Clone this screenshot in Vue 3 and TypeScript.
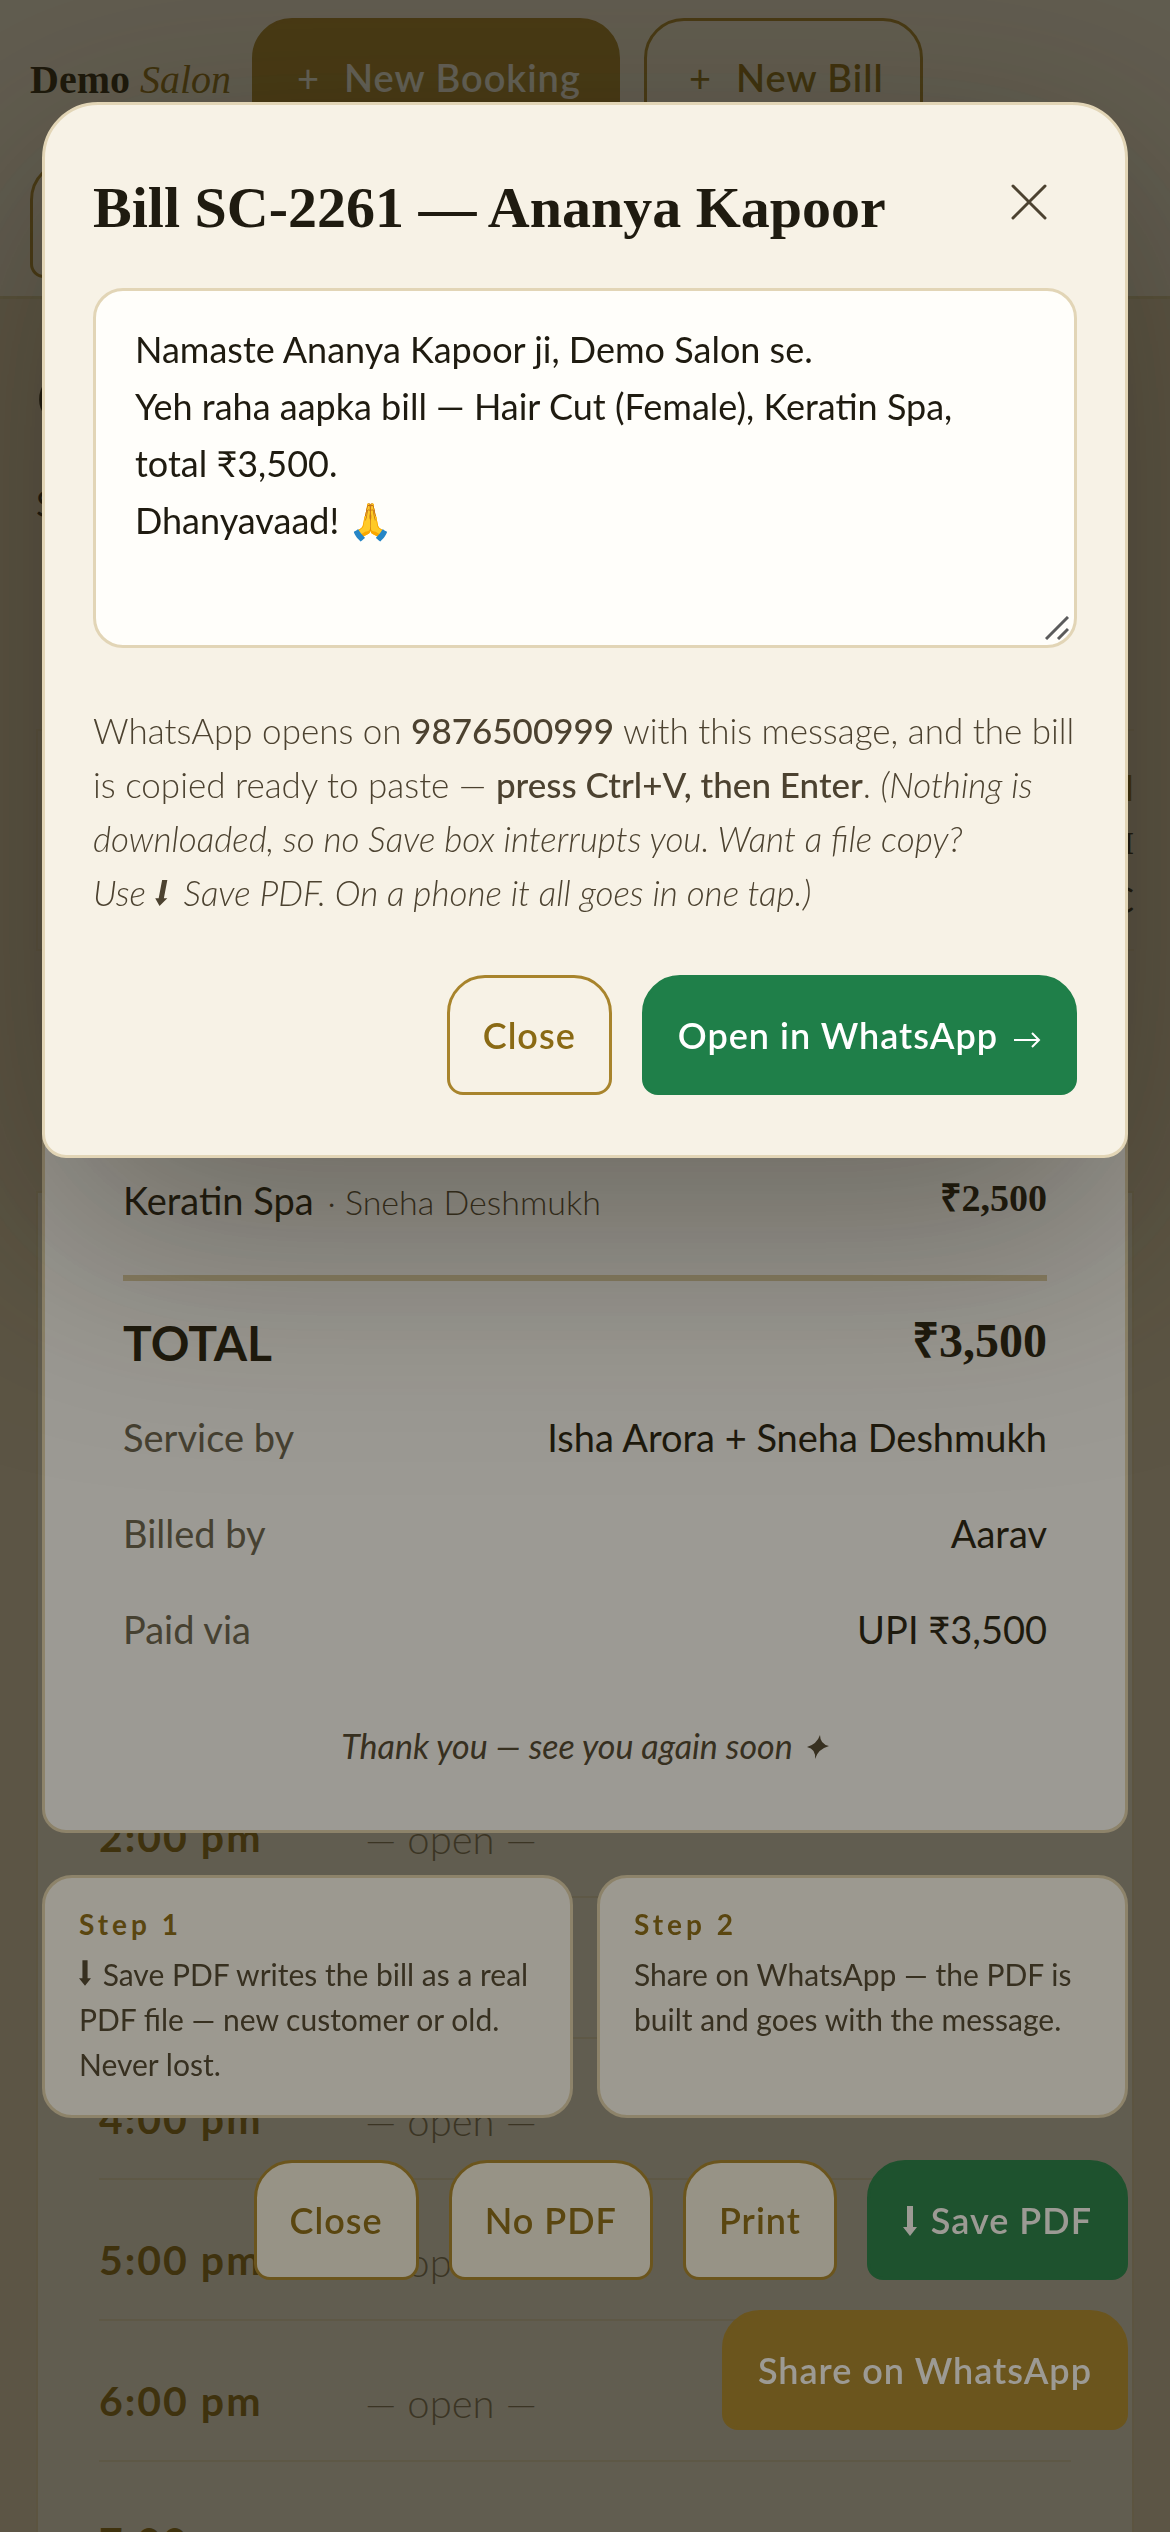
<script setup lang="ts">
import { ref } from 'vue'

const hours: string[] = ['2:00 pm', '3:00 pm', '4:00 pm', '5:00 pm', '6:00 pm', '7:00 pm']

const details: { label: string; value: string }[] = [
  { label: 'Service by', value: 'Isha Arora + Sneha Deshmukh' },
  { label: 'Billed by', value: 'Aarav' },
  { label: 'Paid via', value: 'UPI ₹3,500' },
]

const message = ref<string>(
  'Namaste Ananya Kapoor ji, Demo Salon se.\n' +
    'Yeh raha aapka bill — Hair Cut (Female), Keratin Spa, total ₹3,500.\n' +
    'Dhanyavaad! 🙏',
)
</script>

<template>
  <div class="app">
    <header class="topbar">
      <div class="brand">Demo <em>Salon</em></div>
      <button type="button" class="top-btn filled"><span class="plus">+</span>New Booking</button>
      <button type="button" class="top-btn"><span class="plus">+</span>New Bill</button>
      <button type="button" class="top-btn wide" aria-label="Menu"></button>
    </header>

    <main class="main">
      <div class="peek" aria-hidden="true">
        <span class="peek-heading">C</span>
        <span class="peek-sub">S</span>
      </div>
      <div class="side-card" aria-hidden="true">
        <span class="side-gold">H</span>
        <span class="side-bold">I</span>
        <span class="side-name">C</span>
      </div>
      <section class="schedule">
        <div v-for="hour in hours" :key="hour" class="slot">
          <span class="time">{{ hour }}</span>
          <span class="open">— open —</span>
        </div>
      </section>
    </main>

    <div class="overlay receipt-layer">
      <section class="receipt">
        <div class="line">
          <span>Keratin Spa <span class="staff">· Sneha Deshmukh</span></span>
          <span class="price">₹2,500</span>
        </div>
        <div class="total">
          <span class="total-label">TOTAL</span>
          <span class="total-price">₹3,500</span>
        </div>
        <div v-for="row in details" :key="row.label" class="detail">
          <span class="detail-label">{{ row.label }}</span>
          <span>{{ row.value }}</span>
        </div>
        <p class="thanks">
          Thank you — see you again soon
          <svg class="star" viewBox="0 0 22 24" aria-hidden="true">
            <path d="M13 0 Q13 9 22 11 Q11 14 8 24 Q9 14 0 12 Q10 9 13 0Z" fill="currentColor" />
          </svg>
        </p>
      </section>

      <div class="steps">
        <div class="step">
          <strong class="step-title">Step 1</strong>
          <p>
            <svg class="arrow" viewBox="0 0 14 30" aria-hidden="true">
              <path d="M4 0h6v21h4l-7 9-7-9h4z" fill="currentColor" />
            </svg>
            Save PDF writes the bill as a real PDF file — new customer or old. Never lost.
          </p>
        </div>
        <div class="step">
          <strong class="step-title">Step 2</strong>
          <p>Share on WhatsApp — the PDF is built and goes with the message.</p>
        </div>
      </div>

      <div class="actions">
        <button type="button" class="btn">Close</button>
        <button type="button" class="btn">No PDF</button>
        <button type="button" class="btn">Print</button>
        <button type="button" class="btn green">
          <svg class="arrow" viewBox="0 0 14 30" aria-hidden="true">
            <path d="M4 0h6v21h4l-7 9-7-9h4z" fill="currentColor" />
          </svg>
          Save PDF
        </button>
        <button type="button" class="btn gold">Share on WhatsApp</button>
      </div>
    </div>

    <div class="overlay">
      <section class="dialog" role="dialog" aria-labelledby="dialog-title">
        <div class="dialog-head">
          <h2 id="dialog-title">Bill SC-2261 — Ananya Kapoor</h2>
          <button type="button" class="close" aria-label="Close dialog">
            <svg viewBox="0 0 36 36" aria-hidden="true">
              <path d="M2 2 34 34M34 2 2 34" fill="none" stroke="currentColor" stroke-width="3" stroke-linecap="round" />
            </svg>
          </button>
        </div>
        <div class="field">
          <textarea v-model="message" aria-label="WhatsApp message"></textarea>
          <svg class="grip" viewBox="0 0 24 24" aria-hidden="true">
            <path d="M1 23 23 1M13 23 23 13" fill="none" stroke="#5b5b5b" stroke-width="3" />
          </svg>
        </div>
        <p class="note">
          WhatsApp opens on <b>9876500999</b> with this message, and the bill is copied ready to
          paste — <b>press Ctrl+V, then Enter</b>.
          <em>(Nothing is downloaded, so no Save box interrupts you. Want a file copy?
            <span class="keep">Use
              <svg class="arrow slanted" viewBox="0 0 18 30" aria-hidden="true">
                <path d="M8 0h6l-4 21h4l-9 9-5-9h4z" fill="currentColor" />
              </svg>
              Save PDF.</span>
            On a phone it all goes in one tap.)</em>
        </p>
        <div class="actions">
          <button type="button" class="btn">Close</button>
          <button type="button" class="btn green">
            Open in WhatsApp
            <svg class="right" viewBox="0 0 27 18" aria-hidden="true">
              <path d="M0 9h25M18 2l7 7-7 7" fill="none" stroke="currentColor" stroke-width="2" />
            </svg>
          </button>
        </div>
      </section>
    </div>
  </div>
</template>

<style>
body {
  margin: 0;
}
</style>

<style scoped>
.app {
  height: 100vh;
  overflow: hidden;
  background: #e6dac2;
  color: #1f1b10;
  font-family: Lato, "Noto Sans", sans-serif;
  font-size: 36px;
}

.app *,
.app *::before {
  box-sizing: border-box;
}

button {
  font-family: inherit;
  cursor: pointer;
}

.topbar {
  display: flex;
  flex-wrap: wrap;
  align-items: center;
  gap: 24px;
  padding: 18px 30px;
  background: #f8f3e8;
  border-bottom: 3px solid #dccfa8;
}

.brand {
  width: 198px;
  padding-top: 6px;
  font: bold 40px/48px "Liberation Serif", serif;
  white-space: nowrap;
}

.brand em {
  font-weight: 400;
  color: #8a6a14;
}

.top-btn {
  height: 118px;
  padding: 0 36px 0 42px;
  border: 3px solid #a8842c;
  border-radius: 40px 40px 14px 14px;
  background: transparent;
  color: #8a6a14;
  font-size: 38px;
  font-weight: 600;
  letter-spacing: 1px;
}

.top-btn.filled {
  background: #a8842c;
  color: #fff;
}

.top-btn.wide {
  width: 300px;
}

.plus {
  margin-right: 24px;
  font-weight: 400;
}

.main {
  padding: 0 36px;
}

.peek {
  display: flex;
  flex-direction: column;
  height: 430px;
  padding-top: 68px;
}

.peek-heading {
  font: bold 64px/64px "Liberation Serif", serif;
}

.peek-sub {
  margin-top: 48px;
  line-height: 48px;
}

.side-card {
  display: flex;
  flex-direction: column;
  align-items: flex-end;
  height: 222px;
  margin-bottom: 240px;
  padding-top: 32px;
  overflow: hidden;
  border: 2px solid #e0d2b0;
  border-right: 0;
}

.side-gold {
  color: #8a6a14;
  font-weight: 700;
  line-height: 48px;
}

.side-bold {
  font: bold 32px/64px "Liberation Serif", serif;
}

.side-name {
  line-height: 48px;
}

.schedule {
  padding: 564px 61px 0;
  background: #f7f2e6;
  border: 2px solid #e4d6b2;
}

.slot {
  display: flex;
  align-items: center;
  height: 141px;
  padding-top: 20px;
  border-bottom: 2px solid #ebe1c8;
}

.time {
  width: 266px;
  color: #8a6a14;
  font-size: 41px;
  font-weight: 700;
  letter-spacing: 2px;
}

.open {
  padding-top: 5px;
  color: #7d745c;
  font-size: 40px;
  font-weight: 300;
}

.overlay {
  position: fixed;
  inset: 0;
  display: flex;
  flex-direction: column;
  padding: 102px 42px;
  background: rgba(30, 25, 12, 0.44);
}

.receipt-layer {
  justify-content: flex-end;
}

.receipt {
  display: flex;
  flex: 1;
  flex-direction: column;
  justify-content: flex-end;
  margin-top: 300px;
  padding: 60px 78px;
  background: #fff;
  border: 3px solid #e4d6b4;
  border-radius: 24px;
  font-size: 38px;
}

.line,
.total,
.detail {
  display: flex;
  align-items: center;
  justify-content: space-between;
}

.line,
.detail {
  height: 96px;
}

.staff {
  margin-left: 4px;
  color: #4c4230;
  font-size: 34px;
  font-weight: 300;
}

.price,
.total-price {
  padding-bottom: 8px;
  font-family: "Liberation Serif", serif;
  font-weight: 700;
}

.total {
  height: 114px;
  margin-top: 27px;
  padding-top: 14px;
  border-top: 6px solid #ddcfa8;
}

.total-label,
.total-price {
  font-size: 48px;
  font-weight: 700;
}

.detail-label {
  color: #66604f;
}

.thanks {
  margin: 45px 0 0;
  color: #4c4230;
  font-size: 34px;
  font-style: italic;
  line-height: 48px;
  text-align: center;
}

.star {
  width: 22px;
  height: 24px;
  margin-left: 6px;
}

.steps {
  display: grid;
  grid-template-columns: 1fr 1fr;
  gap: 24px;
  margin-top: 42px;
}

.step {
  padding: 26px 34px 28px;
  background: #fffdf8;
  border: 3px solid #e4d6b4;
  border-radius: 30px;
  color: #4c4230;
  font-size: 30px;
  line-height: 45px;
}

.step-title {
  display: block;
  color: #8a6a14;
  font-size: 28px;
  line-height: 40px;
  letter-spacing: 4px;
}

.step p {
  margin: 8px 0 0;
}

.arrow {
  width: 12px;
  height: 26px;
  margin-right: 4px;
}

.btn .arrow {
  width: 14px;
  height: 30px;
  vertical-align: -2px;
}

.arrow.slanted {
  width: 16px;
}

.keep {
  white-space: nowrap;
}

.actions {
  display: flex;
  flex-wrap: wrap;
  justify-content: flex-end;
  gap: 30px;
  margin-top: 42px;
}

.btn {
  height: 120px;
  padding: 0 33px;
  border: 3px solid #a8842c;
  border-radius: 38px 38px 16px 16px;
  background: #f7f2e6;
  color: #8a6a14;
  font-size: 36px;
  font-weight: 600;
  letter-spacing: 1px;
}

.btn.green {
  border-color: #1f7f49;
  background: #1f7f49;
  color: #fff;
}

.btn.gold {
  background: #a8842c;
  color: #fff;
}

.right {
  width: 27px;
  height: 18px;
  margin-left: 6px;
}

.dialog {
  padding: 63px 48px 60px;
  background: #f7f2e6;
  border: 3px solid #e2d5b6;
  border-radius: 56px 56px 24px 24px;
  box-shadow: 0 72px 240px rgba(30, 25, 12, 0.4);
}

.dialog-head {
  display: flex;
  align-items: center;
  justify-content: space-between;
  padding-right: 30px;
}

h2 {
  margin: 0;
  font: bold 58px/80px "Liberation Serif", serif;
}

.close {
  height: 48px;
  padding: 0 0 12px;
  border: 0;
  background: none;
  color: #4c4230;
}

.close svg {
  display: block;
  width: 36px;
  height: 36px;
}

.field {
  position: relative;
  margin-top: 40px;
}

textarea {
  display: block;
  width: 100%;
  height: 360px;
  padding: 30px 60px 30px 39px;
  overflow: hidden;
  resize: none;
  background: #fffefa;
  border: 3px solid #e2d5b6;
  border-radius: 30px;
  color: #1f1b10;
  font-family: inherit;
  font-size: 36px;
  line-height: 57px;
}

.grip {
  position: absolute;
  right: 8px;
  bottom: 8px;
  width: 24px;
  height: 24px;
}

.note {
  margin: 55px 0 0;
  color: #4c4230;
  font-size: 35px;
  font-weight: 300;
  line-height: 54px;
}

.note b {
  font-weight: 500;
}

.dialog .actions {
  margin-top: 56px;
}
</style>
